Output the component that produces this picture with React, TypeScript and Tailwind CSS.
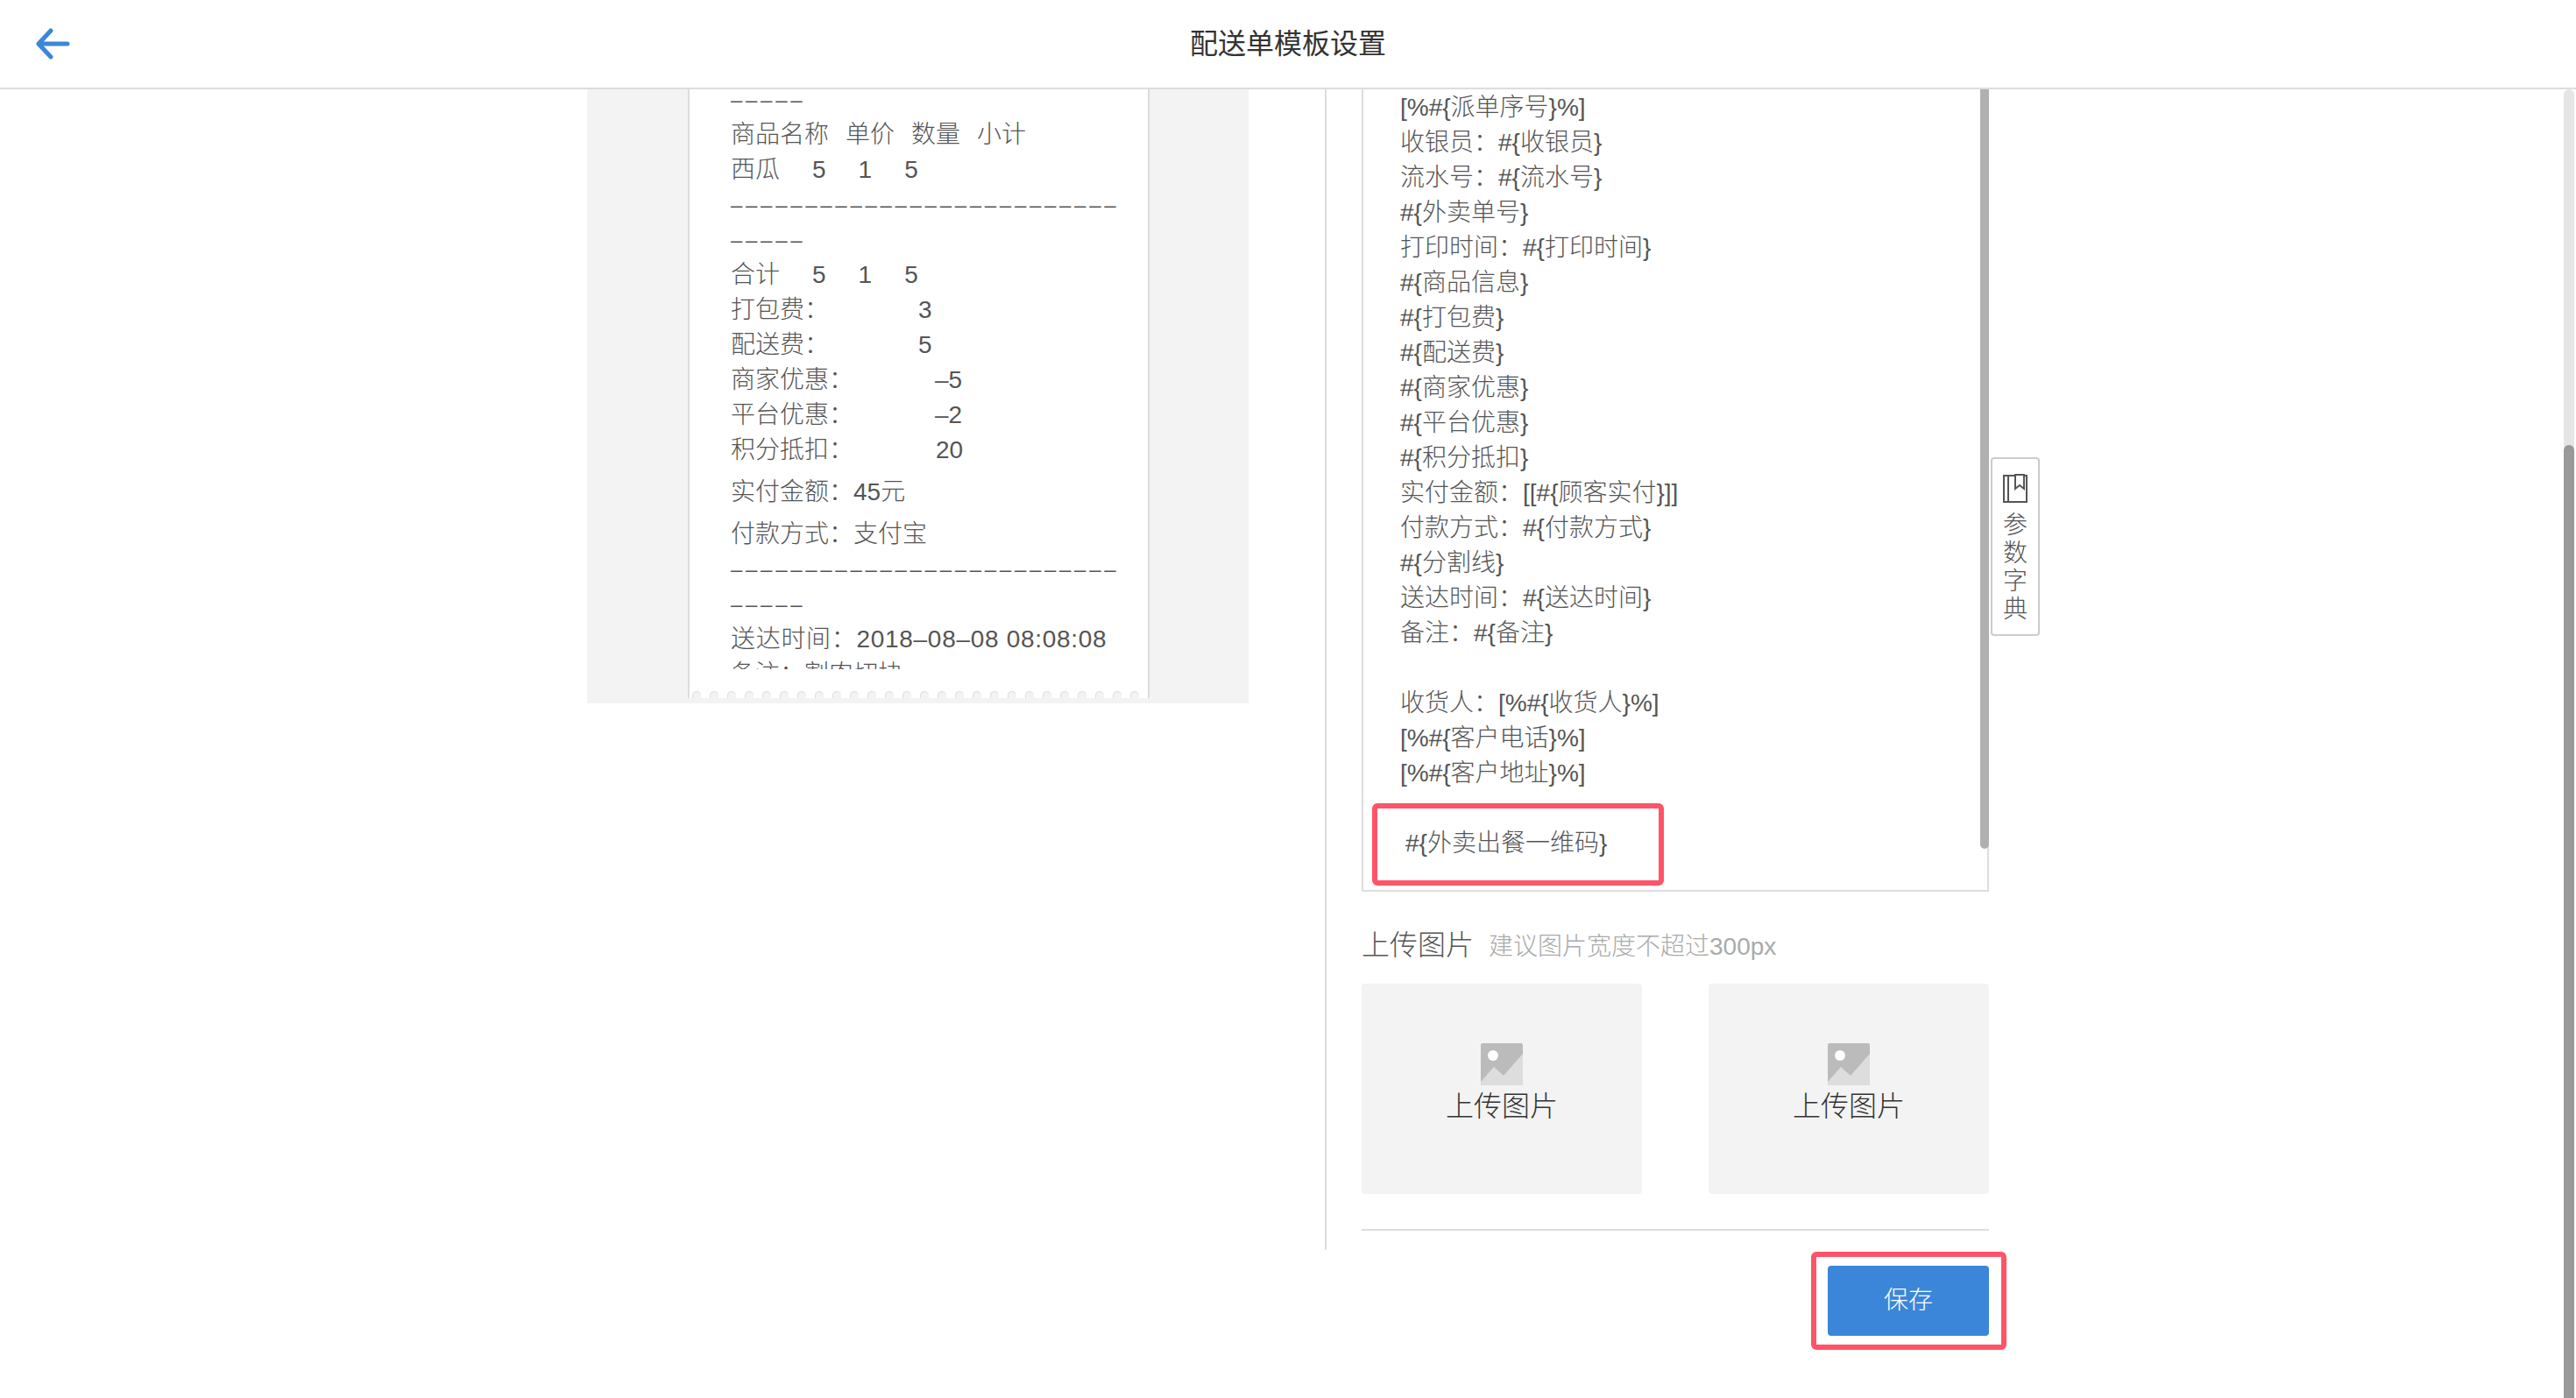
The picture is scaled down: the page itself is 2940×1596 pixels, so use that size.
const templateLines = [
  "[%#{派单序号}%]",
  "收银员\uFF1A#{收银员}",
  "流水号\uFF1A#{流水号}",
  "#{外卖单号}",
  "打印时间\uFF1A#{打印时间}",
  "#{商品信息}",
  "#{打包费}",
  "#{配送费}",
  "#{商家优惠}",
  "#{平台优惠}",
  "#{积分抵扣}",
  "实付金额\uFF1A[[#{顾客实付}]]",
  "付款方式\uFF1A#{付款方式}",
  "#{分割线}",
  "送达时间\uFF1A#{送达时间}",
  "备注\uFF1A#{备注}",
  "\u00a0",
  "收货人\uFF1A[%#{收货人}%]",
  "[%#{客户电话}%]",
  "[%#{客户地址}%]",
  "\u00a0",
];

const fees = [
  { label: "打包费\uFF1A", value: "3", gap: "gap-[102px]" },
  { label: "配送费\uFF1A", value: "5", gap: "gap-[102px]" },
  { label: "商家优惠\uFF1A", value: "–5", gap: "gap-[93px]" },
  { label: "平台优惠\uFF1A", value: "–2", gap: "gap-[93px]" },
  { label: "积分抵扣\uFF1A", value: "20", gap: "gap-[94px]" },
];

function DashRule({ count }: { count: number }) {
  return <div className="break-all text-[24px] tracking-[3.7px]">{"–".repeat(count)}</div>;
}

function ImagePlaceholder() {
  return (
    <svg width="48" height="48" viewBox="0 0 48 48">
      <rect width="48" height="48" rx="2" fill="#bbbbbb" />
      <path d="M0 44 15 27 26 37 48 12V46a2 2 0 0 1-2 2H2a2 2 0 0 1-2-2Z" fill="#dddddd" />
      <circle cx="14" cy="14" r="6" fill="#ffffff" />
    </svg>
  );
}

function UploadCard() {
  return (
    <div className="flex h-[240px] w-[320px] flex-col items-center rounded-[4px] bg-[#f3f3f3] pt-[68px]">
      <ImagePlaceholder />
      <span className="mt-[2px] text-[32px] leading-[44px] text-[#333]">上传图片</span>
    </div>
  );
}

export default function App() {
  return (
    <div className="relative h-[1596px] overflow-hidden bg-white font-['Liberation_Sans','Noto_Sans_CJK_SC',sans-serif] text-[28px] font-light leading-[40px] text-[#555]">
      <header className="grid h-[102px] grid-cols-[1fr_auto_1fr] items-center border-b-2 border-[#ddd]">
        <svg className="ml-[40px]" width="40" height="36" viewBox="0 0 40 36" fill="none" stroke="#3b86d8" strokeWidth="5" strokeLinecap="round" strokeLinejoin="round">
          <path d="M37 18H4M18 3 4 18l14 15" />
        </svg>
        <h1 className="text-[32px] font-normal text-[#333]">配送单模板设置</h1>
      </header>

      <main className="flex items-start pl-[670px]">
        <section className="h-[701px] w-[755px] bg-[#f3f3f3] pl-[115px]">
          <div className="relative h-[695px] w-[527px] border-x-2 border-[#ddd] bg-white">
            <div className="h-[662px] overflow-hidden pl-[47px] pr-[32px]">
              <div className="-mt-[8px]">
                <DashRule count={5} />
                <div className="flex gap-[19px]">
                  <span>商品名称</span>
                  <span>单价</span>
                  <span>数量</span>
                  <span>小计</span>
                </div>
                <div className="flex gap-[37px]">
                  <span className="w-[56px]">西瓜</span>
                  <span>5</span>
                  <span>1</span>
                  <span>5</span>
                </div>
                <DashRule count={31} />
                <div className="flex gap-[37px]">
                  <span className="w-[56px]">合计</span>
                  <span>5</span>
                  <span>1</span>
                  <span>5</span>
                </div>
                {fees.map(({ label, value, gap }) => (
                  <div key={label} className={`flex ${gap}`}>
                    <span>{label}</span>
                    <span>{value}</span>
                  </div>
                ))}
                <div className="mt-[8px]">{"实付金额\uFF1A45元"}</div>
                <div className="mt-[8px]">{"付款方式\uFF1A支付宝"}</div>
                <DashRule count={31} />
                <div className="tracking-[0.7px]">{"送达时间\uFF1A2018–08–08 08:08:08"}</div>
                <div>{"备注\uFF1A割肉切块"}</div>
              </div>
            </div>
            <div className="absolute bottom-0 left-[3px] flex gap-[10px]">
              {Array.from({ length: 26 }, (_, i) => (
                <span key={i} className="h-[8px] w-[10px] rounded-t-full border-l border-t border-[#ddd] bg-[#f3f3f3]" />
              ))}
            </div>
          </div>
        </section>

        <section className="ml-[87px] w-[758px]">
          <div className="h-[1325px] border-l-2 border-[#ddd] pl-[40px]">
            <div className="relative border-x-2 border-b-2 border-[#ddd] pb-[33px] pl-[42px] pt-px">
              {templateLines.map((line, i) => (
                <div key={i}>{line}</div>
              ))}
              <div className="pl-[6px]">#{"{外卖出餐一维码}"}</div>

              <div className="absolute right-[-2px] top-0 h-[867px] w-[10px] rounded-b-full bg-[#b0b0b0]" />
              <div className="absolute left-[10px] top-[815px] h-[94px] w-[333px] rounded-[6px] border-[6px] border-[#ff5468]" />

              <button className="absolute left-[716px] top-[420px] flex h-[204px] w-[56px] flex-col items-center rounded-[4px] border-2 border-[#ccc] bg-white pt-[17px] text-[28px] leading-[32px] text-[#555]">
                <svg className="mb-[10px] shrink-0" width="28" height="33" viewBox="0 0 28 33" fill="none" stroke="#555" strokeWidth="2">
                  <path d="M1 2h26v30H1zM6 2v30" />
                  <path d="M14 1h10v16l-5-4-5 4z" fill="#fff" />
                </svg>
                <span>参</span>
                <span>数</span>
                <span>字</span>
                <span>典</span>
              </button>
            </div>

            <div className="mt-[39px] flex items-baseline gap-[17px]">
              <span className="text-[32px] leading-[44px]">上传图片</span>
              <span className="text-[28px] leading-[44px] text-[#aaa]">建议图片宽度不超过300px</span>
            </div>

            <div className="mt-[20px] flex justify-between">
              <UploadCard />
              <UploadCard />
            </div>

            <div className="mt-[40px] h-[2px] bg-[#ddd]" />
          </div>

          <div className="relative ml-auto mt-[18px] w-[184px]">
            <button className="h-[80px] w-[184px] rounded-[4px] bg-[#3b86d8] text-[28px] text-white">保存</button>
            <div className="absolute -left-[19px] -right-[20px] -top-[16px] -bottom-[16px] rounded-[6px] border-[6px] border-[#ff5468]" />
          </div>
        </section>
      </main>

      <div className="absolute bottom-0 right-[2px] top-[102px] w-[12px] overflow-hidden rounded-t-full bg-[#e5e5e5]">
        <div className="mt-[406px] h-full rounded-t-full bg-[#999]" />
      </div>
    </div>
  );
}
